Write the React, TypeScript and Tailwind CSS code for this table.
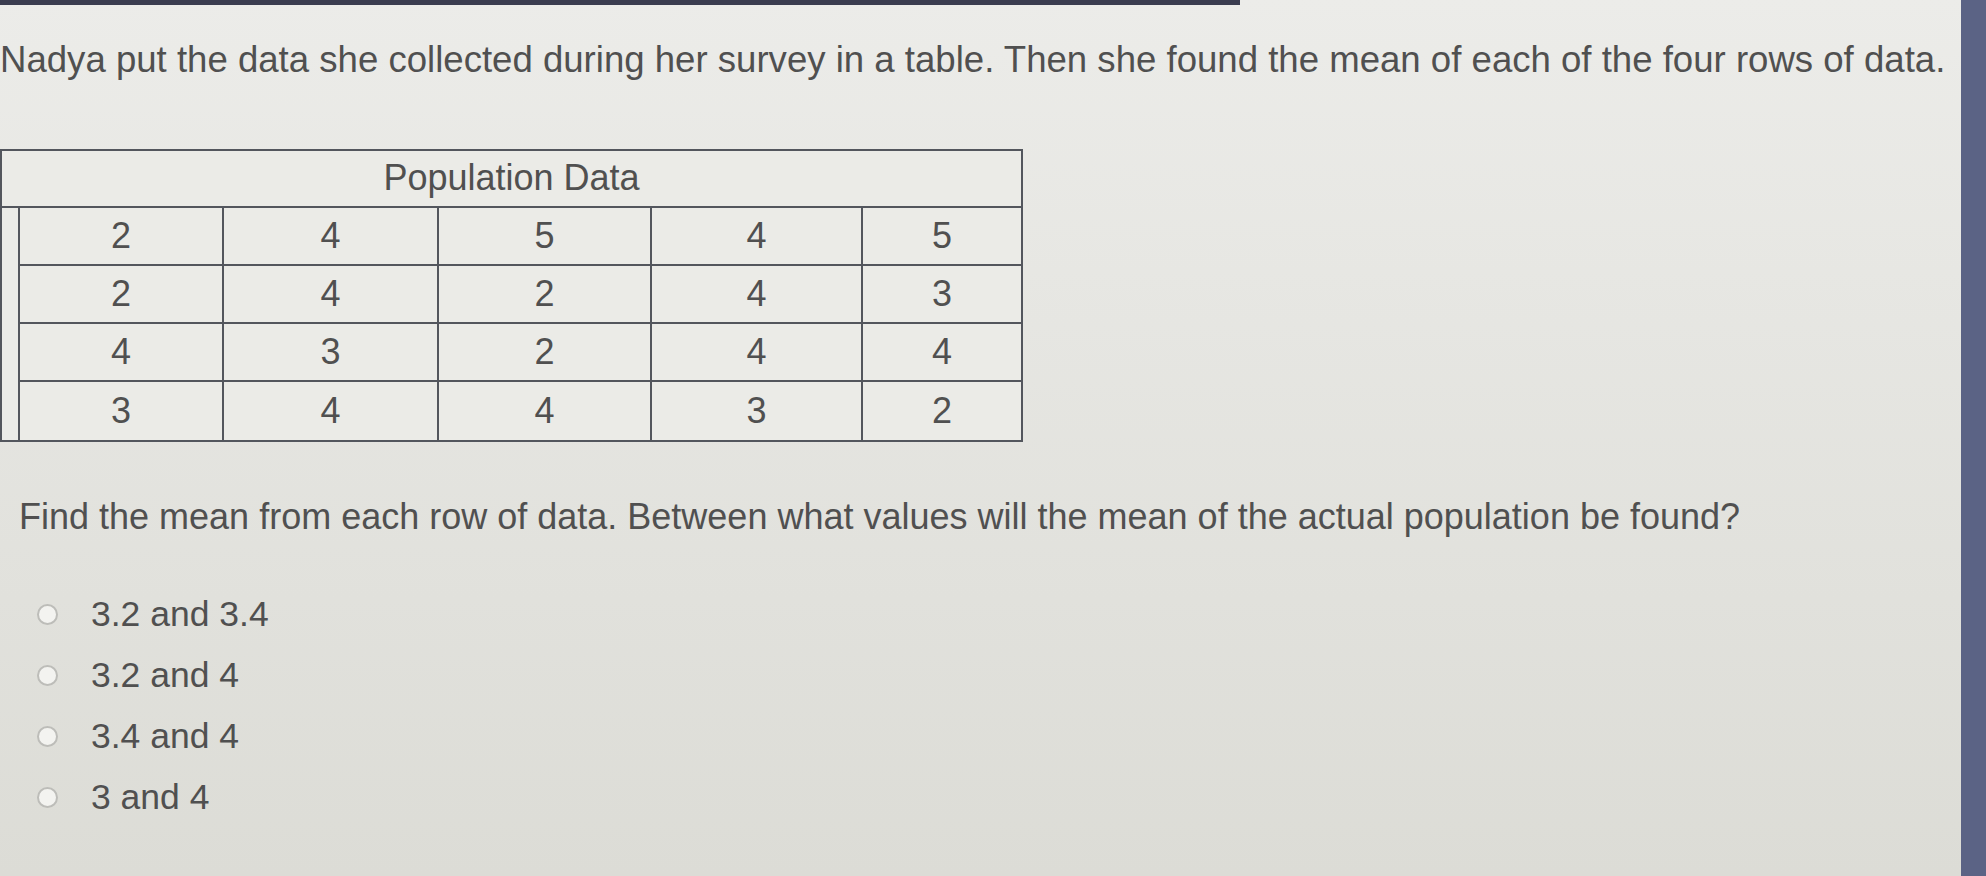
import React from 'react'

const rows = [
  [2, 4, 5, 4, 5],
  [2, 4, 2, 4, 3],
  [4, 3, 2, 4, 4],
  [3, 4, 4, 3, 2],
]

const options = ['3.2 and 3.4', '3.2 and 4', '3.4 and 4', '3 and 4']

export default function App() {
  return (
    <div className="flex h-[876px] w-[1986px] overflow-hidden bg-gradient-to-b from-[#ecece9] to-[#dcdcd6] font-['Liberation_Sans',Arial,sans-serif] text-[#505050]">
      <div className="flex flex-1 flex-col">
        {/* top strip */}
        <div className="h-[5px] w-[1240px] bg-[#3b3d4f]" />

        <p className="mt-[37px] whitespace-nowrap text-[36.6px] leading-none">
          Nadya put the data she collected during her survey in a table. Then she found the mean of each of the four rows of data.
        </p>

        {/* table */}
        <div className="mt-[70px] w-[1023px] border-2 border-[#53565d] bg-[#ebebe7]">
          <div className="flex h-[57px] items-center justify-center border-b-2 border-[#53565d] text-[36px] leading-none">
            Population Data
          </div>
          <div className="ml-[16px] flex flex-col border-l-2 border-[#53565d]">
            {rows.map((r, i) => (
              <div
                key={i}
                className={`grid h-[58px] grid-cols-[204px_215px_213px_211px_1fr] ${i < rows.length - 1 ? 'border-b-2 border-[#53565d]' : ''}`}
              >
                {r.map((n, j) => (
                  <div
                    key={j}
                    className={`flex items-center justify-center text-[36px] leading-none ${j < r.length - 1 ? 'border-r-2 border-[#53565d]' : ''}`}
                  >
                    {n}
                  </div>
                ))}
              </div>
            ))}
          </div>
        </div>

        <p className="ml-[19px] mt-[57px] whitespace-nowrap text-[36px] leading-none">
          Find the mean from each row of data. Between what values will the mean of the actual population be found?
        </p>

        <div className="ml-[37px] mt-[62px] flex flex-col gap-[25px]">
          {options.map((o) => (
            <label key={o} className="flex h-[36px] items-center gap-[33px] text-[35.5px] leading-none">
              <span className="h-[21px] w-[21px] shrink-0 rounded-full border-2 border-[#bdbdb9] bg-[#f3f3f0]" />
              <span>{o}</span>
            </label>
          ))}
        </div>
      </div>

      {/* right edge */}
      <div className="w-[25px] bg-[#5b6385]" />
    </div>
  )
}
